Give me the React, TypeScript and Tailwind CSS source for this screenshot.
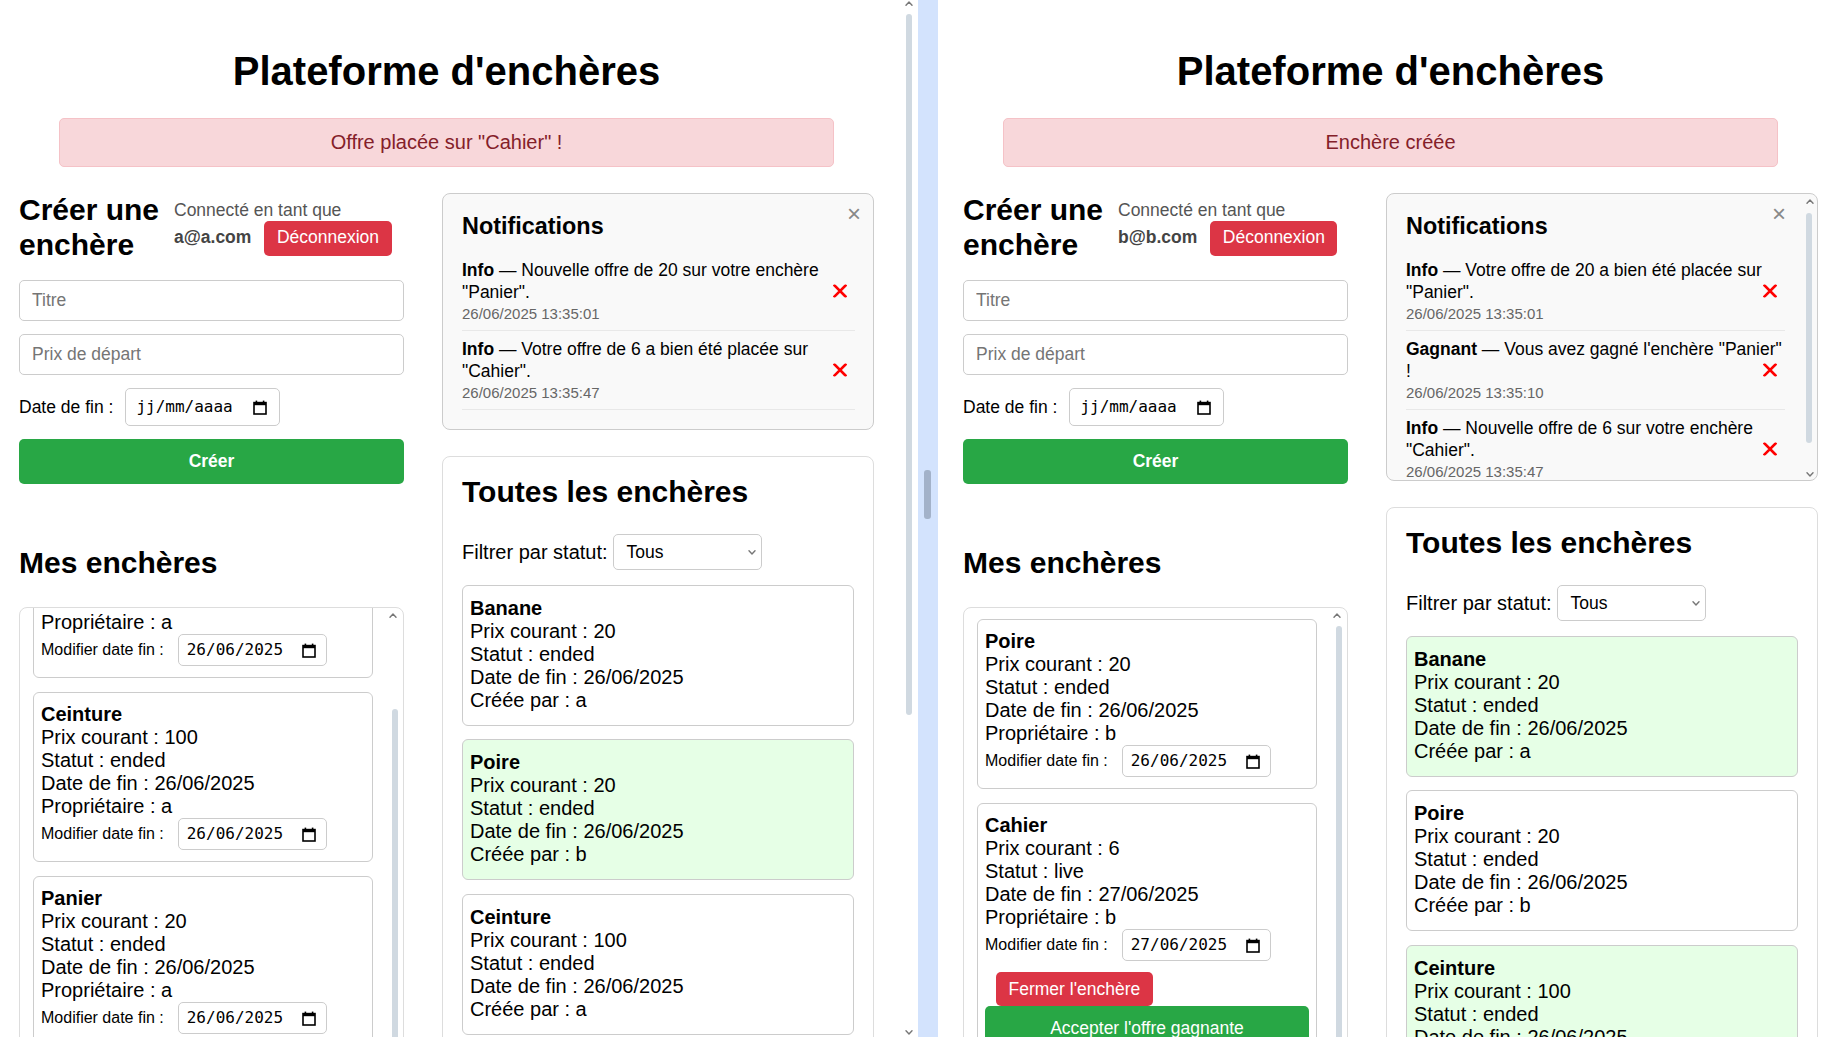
type Auction = {
  title: string;
  price: number;
  status: string;
  end: string;
  by: string;
  win?: boolean;
};

type Notif = { kind: string; text: string; date: string };

type PaneProps = {
  user: string;
  alert: string;
  notifs: Notif[];
  notifScroll?: boolean;
  mine: Auction[];
  mineOffset?: boolean;
  all: Auction[];
};

const leftPane: PaneProps = {
  user: "a@a.com",
  alert: 'Offre placée sur "Cahier" !',
  notifs: [
    { kind: "Info", text: 'Nouvelle offre de 20 sur votre enchère "Panier".', date: "26/06/2025 13:35:01" },
    { kind: "Info", text: 'Votre offre de 6 a bien été placée sur "Cahier".', date: "26/06/2025 13:35:47" },
  ],
  mine: [
    { title: "Banane", price: 20, status: "ended", end: "26/06/2025", by: "a" },
    { title: "Ceinture", price: 100, status: "ended", end: "26/06/2025", by: "a" },
    { title: "Panier", price: 20, status: "ended", end: "26/06/2025", by: "a" },
  ],
  mineOffset: true,
  all: [
    { title: "Banane", price: 20, status: "ended", end: "26/06/2025", by: "a" },
    { title: "Poire", price: 20, status: "ended", end: "26/06/2025", by: "b", win: true },
    { title: "Ceinture", price: 100, status: "ended", end: "26/06/2025", by: "a" },
  ],
};

const rightPane: PaneProps = {
  user: "b@b.com",
  alert: "Enchère créée",
  notifs: [
    { kind: "Info", text: 'Votre offre de 20 a bien été placée sur "Panier".', date: "26/06/2025 13:35:01" },
    { kind: "Gagnant", text: 'Vous avez gagné l\'enchère "Panier" !', date: "26/06/2025 13:35:10" },
    { kind: "Info", text: 'Nouvelle offre de 6 sur votre enchère "Cahier".', date: "26/06/2025 13:35:47" },
  ],
  notifScroll: true,
  mine: [
    { title: "Poire", price: 20, status: "ended", end: "26/06/2025", by: "b" },
    { title: "Cahier", price: 6, status: "live", end: "27/06/2025", by: "b" },
  ],
  all: [
    { title: "Banane", price: 20, status: "ended", end: "26/06/2025", by: "a", win: true },
    { title: "Poire", price: 20, status: "ended", end: "26/06/2025", by: "b" },
    { title: "Ceinture", price: 100, status: "ended", end: "26/06/2025", by: "a", win: true },
  ],
};

function CalendarIcon() {
  return (
    <svg width="14" height="15" viewBox="0 0 14 15" fill="none">
      <rect x="1" y="2.6" width="12" height="11.4" stroke="#000" strokeWidth="1.6" />
      <rect x="1" y="2.6" width="12" height="2.6" fill="#000" />
      <rect x="2.6" y="0.6" width="1.6" height="2.4" fill="#000" />
      <rect x="9.8" y="0.6" width="1.6" height="2.4" fill="#000" />
    </svg>
  );
}

function Chevron({ up }: { up?: boolean }) {
  return (
    <svg width="8" height="5" viewBox="0 0 8 5" fill="none">
      <polyline
        points={up ? "1,4.2 4,1 7,4.2" : "1,0.8 4,4 7,0.8"}
        stroke="#777"
        strokeWidth="1.4"
        strokeLinecap="round"
        strokeLinejoin="round"
      />
    </svg>
  );
}

function RedX() {
  return (
    <svg width="14" height="13" viewBox="0 0 14 13">
      <path d="M1.5 1 L12.5 12 M12.5 1 L1.5 12" stroke="#f00" strokeWidth="2.6" strokeLinecap="square" />
    </svg>
  );
}

function DateField({ value, small }: { value: string; small?: boolean }) {
  return (
    <div
      className={
        small
          ? "flex h-[32px] w-[149px] shrink-0 items-center justify-between rounded-[5px] border border-[#ccc] bg-white pl-[8px] pr-[10px]"
          : "flex h-[38px] w-[155px] shrink-0 items-center justify-between rounded-[5px] border border-[#ccc] bg-white pl-[10px] pr-[12px]"
      }
    >
      <span className="font-['DejaVu_Sans_Mono',monospace] text-[16px] leading-none">{value}</span>
      <CalendarIcon />
    </div>
  );
}

function MyCard({ a }: { a: Auction }) {
  const live = a.status === "live";
  return (
    <div className="mb-[14px] rounded-[6px] border border-[#ccc] bg-white px-[7px] pb-[11px] pt-[10px]">
      <div className="text-[20px] font-bold leading-[23px]">{a.title}</div>
      <div className="text-[20px] leading-[23px]">Prix courant : {a.price}</div>
      <div className="text-[20px] leading-[23px]">Statut : {a.status}</div>
      <div className="text-[20px] leading-[23px]">Date de fin : {a.end}</div>
      <div className="text-[20px] leading-[23px]">Propriétaire : {a.by}</div>
      <div className="flex items-center gap-[14px]">
        <span className="text-[16px]">Modifier date fin :</span>
        <DateField small value={a.end} />
      </div>
      {live && (
        <>
          <div className="mt-[11px] pl-[11px]">
            <button className="h-[34px] rounded-[5px] bg-[#dc3545] px-[12.5px] text-[17.5px] text-white">
              Fermer l'enchère
            </button>
          </div>
          <button className="block h-[44px] w-full rounded-[5px] bg-[#28a745] text-[17.5px] text-white">
            Accepter l'offre gagnante
          </button>
        </>
      )}
    </div>
  );
}

function AuctionCard({ a }: { a: Auction }) {
  return (
    <div
      className={`mb-[13.5px] rounded-[6px] border border-[#ccc] px-[7px] pb-[13px] pt-[11px] ${
        a.win ? "bg-[#e6ffe6]" : "bg-white"
      }`}
    >
      <div className="text-[20px] font-bold leading-[23px]">{a.title}</div>
      <div className="text-[20px] leading-[23px]">Prix courant : {a.price}</div>
      <div className="text-[20px] leading-[23px]">Statut : {a.status}</div>
      <div className="text-[20px] leading-[23px]">Date de fin : {a.end}</div>
      <div className="text-[20px] leading-[23px]">Créée par : {a.by}</div>
    </div>
  );
}

function Notifications({ notifs, scroll }: { notifs: Notif[]; scroll?: boolean }) {
  return (
    <div
      className={`relative overflow-hidden rounded-[8px] border border-[#ccc] bg-[#f9f9f9] pl-[19px] pt-[18.5px] ${
        scroll ? "h-[288px] pr-[32px]" : "pb-[19px] pr-[18px]"
      }`}
    >
      <h3 className="text-[23.4px] font-bold leading-[27px]">Notifications</h3>
      <span className={`absolute top-[8px] text-[24px] leading-[24px] text-[#888] ${scroll ? "right-[31px]" : "right-[12px]"}`}>
        ×
      </span>
      <ul className="mt-[12.5px]">
        {notifs.map((n, i) => (
          <li key={i} className="relative border-b border-[#e8e8e8] py-[8px]">
            <p className="text-[17.5px] leading-[21.5px]">
              <b>{n.kind}</b>
              <span> — {n.text}</span>
            </p>
            <p className="mt-[2px] text-[15px] leading-[17px] text-[#666]">{n.date}</p>
            <span className="absolute right-[8px] top-1/2 -translate-y-1/2">
              <RedX />
            </span>
          </li>
        ))}
      </ul>
      {scroll && (
        <>
          <span className="absolute right-[3px] top-[5px]">
            <Chevron up />
          </span>
          <div className="absolute right-[5px] top-[19px] h-[230px] w-[6px] rounded-full bg-[#d0d9e1]" />
          <span className="absolute bottom-[3px] right-[3px]">
            <Chevron />
          </span>
        </>
      )}
    </div>
  );
}

function Pane({ p }: { p: PaneProps }) {
  return (
    <div className="w-[855px] pt-[48px]">
      <h1 className="text-center text-[40px] font-bold leading-[46px]">Plateforme d'enchères</h1>
      <div className="mx-[40px] mt-[24px] rounded-[5px] border border-[#f5c2c7] bg-[#f8d7da] py-[12px] text-center text-[20px] leading-[23px] text-[#842029]">
        {p.alert}
      </div>

      <div className="mt-[26px] flex items-start gap-[38px]">
        <div className="w-[385px] shrink-0">
          <div className="flex items-start gap-[10px]">
            <h2 className="w-[145px] shrink-0 text-[30px] font-bold leading-[34.5px]">Créer une enchère</h2>
            <div className="mt-[7px]">
              <div className="text-[17.5px] leading-[20px] text-[#555]">Connecté en tant que</div>
              <div className="mt-[1px] flex items-center gap-[13px]">
                <b className="-mt-[3px] text-[17.5px] text-[#444]">{p.user}</b>
                <button className="rounded-[5px] bg-[#dc3545] px-[12.5px] pb-[9px] pt-[6px] text-[17.5px] leading-[20px] text-white">
                  Déconnexion
                </button>
              </div>
            </div>
          </div>
          <input
            readOnly
            placeholder="Titre"
            className="mt-[18px] block h-[41px] w-full rounded-[5px] border border-[#ccc] px-[12px] text-[17.5px] outline-none placeholder:text-[#757575]"
          />
          <input
            readOnly
            placeholder="Prix de départ"
            className="mt-[13px] block h-[41px] w-full rounded-[5px] border border-[#ccc] px-[12px] text-[17.5px] outline-none placeholder:text-[#757575]"
          />
          <div className="mt-[13px] flex items-center gap-[12px]">
            <span className="text-[17.5px]">Date de fin :</span>
            <DateField value="jj/mm/aaaa" />
          </div>
          <button className="mt-[13px] block h-[45px] w-full rounded-[5px] bg-[#28a745] text-[17.5px] font-bold text-white">
            Créer
          </button>

          <h2 className="mt-[62px] text-[30px] font-bold leading-[34.5px]">Mes enchères</h2>
          <div className="relative mt-[26px] h-[470px] overflow-hidden rounded-[8px] border border-[#ddd] pl-[13px] pr-[30px] pt-[11.5px]">
            <div className={p.mineOffset ? "-mt-[111px]" : ""}>
              {p.mine.map((a) => (
                <MyCard key={a.title} a={a} />
              ))}
            </div>
            <span className="absolute right-[6px] top-[5px]">
              <Chevron up />
            </span>
            <div
              className={`absolute right-[5px] w-[6px] rounded-full bg-[#d0d9e1] ${
                p.mineOffset ? "top-[101px] h-[400px]" : "top-[18px] h-[460px]"
              }`}
            />
          </div>
        </div>

        <div className="w-[432px] shrink-0">
          <Notifications notifs={p.notifs} scroll={p.notifScroll} />
          <div className="mt-[26px] h-[700px] rounded-[8px] border border-[#ddd] bg-white px-[19px] pt-[18px]">
            <h2 className="text-[30px] font-bold leading-[34.5px]">Toutes les enchères</h2>
            <div className="mt-[24.5px] flex items-center gap-[5px]">
              <span className="text-[20px]">Filtrer par statut:</span>
              <div className="flex h-[36px] w-[149px] items-center justify-between rounded-[5px] border border-[#ccc] bg-white pl-[13px] pr-[5px]">
                <span className="text-[17.5px]">Tous</span>
                <Chevron />
              </div>
            </div>
            <div className="mt-[14.5px]">
              {p.all.map((a) => (
                <AuctionCard key={a.title} a={a} />
              ))}
            </div>
          </div>
        </div>
      </div>
    </div>
  );
}

export default function App() {
  return (
    <div className="flex h-[1037px] w-[1845px] overflow-hidden bg-white font-['Liberation_Sans',Arial,sans-serif] leading-[normal] text-black">
      <div className="flex w-[918px] shrink-0">
        <div className="w-[900px] shrink-0 pl-[19px]">
          <Pane p={leftPane} />
        </div>
        <div className="relative w-[18px] shrink-0">
          <span className="absolute left-[5px] top-[1px]">
            <Chevron up />
          </span>
          <div className="ml-[6px] mt-[14px] h-[701px] w-[6px] rounded-full bg-[#d0d9e1]" />
          <span className="absolute bottom-[2px] left-[5px]">
            <Chevron />
          </span>
        </div>
      </div>
      <div className="w-[20px] shrink-0 bg-[#d3e3fd] pt-[470px]">
        <div className="ml-[6px] h-[49px] w-[7px] rounded-[3px] bg-[#a3b2c9]" />
      </div>
      <div className="w-[907px] shrink-0 pl-[25px]">
        <Pane p={rightPane} />
      </div>
    </div>
  );
}
